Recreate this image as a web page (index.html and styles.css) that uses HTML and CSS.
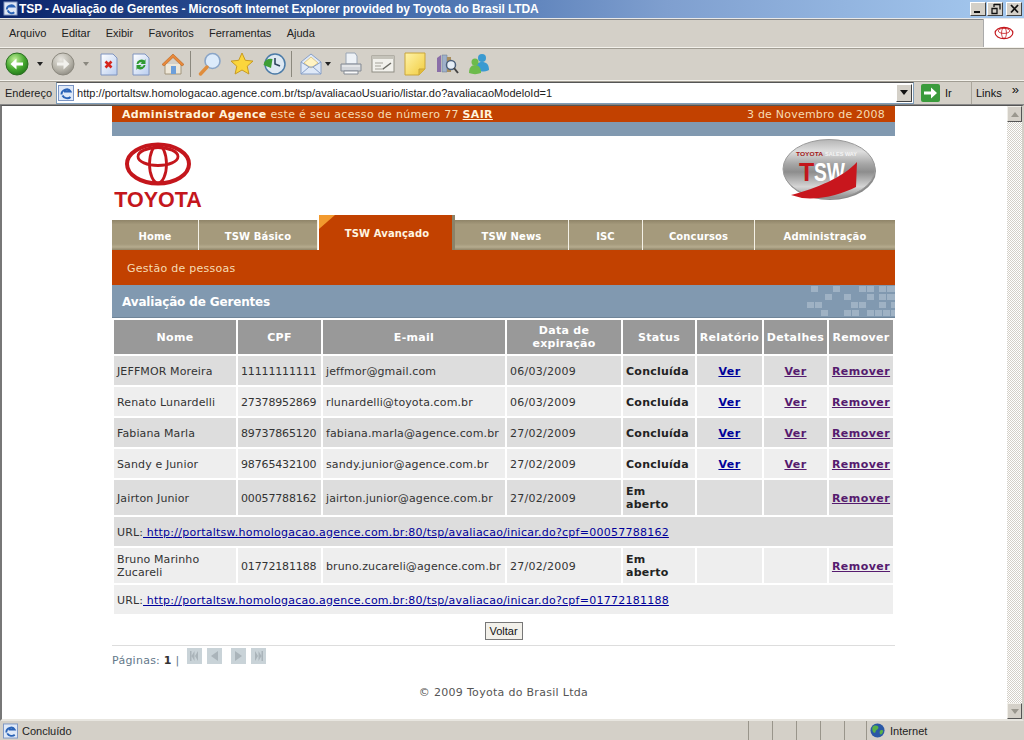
FILE: index.html
```html
<!DOCTYPE html>
<html lang="pt-BR">
<head>
<meta charset="utf-8">
<title>TSP - Avaliação de Gerentes</title>
<link rel="stylesheet" href="styles.css">
</head>
<body>
<svg class="defs" width="0" height="0">
  <defs>
    <radialGradient id="gGreen" cx="40%" cy="30%" r="80%"><stop offset="0" stop-color="#c4f09a"/><stop offset=".55" stop-color="#45a82e"/><stop offset="1" stop-color="#1b6d16"/></radialGradient>
    <radialGradient id="gGrey" cx="40%" cy="30%" r="80%"><stop offset="0" stop-color="#e8e6e0"/><stop offset=".6" stop-color="#b5b2a8"/><stop offset="1" stop-color="#85827a"/></radialGradient>
    <linearGradient id="gPage" x1="0" y1="0" x2="1" y2="1"><stop offset="0" stop-color="#fff"/><stop offset="1" stop-color="#b9cdef"/></linearGradient>
    <linearGradient id="gNote" x1="0" y1="0" x2="1" y2="1"><stop offset="0" stop-color="#fff3a8"/><stop offset="1" stop-color="#f1cc3f"/></linearGradient>
    <linearGradient id="gBadge" x1="0" y1="0" x2="0" y2="1"><stop offset="0" stop-color="#b5b5b5"/><stop offset=".2" stop-color="#dedede"/><stop offset=".42" stop-color="#a5a5a5"/><stop offset=".55" stop-color="#8d8d8d"/><stop offset=".8" stop-color="#d5d5d5"/><stop offset="1" stop-color="#8a8a8a"/></linearGradient>
    <symbol id="emblem" viewBox="0 0 70 46">
      <g fill="none" stroke="currentColor">
        <ellipse cx="35" cy="23" rx="31" ry="19.500" stroke-width="4"/>
        <ellipse cx="35" cy="15.500" rx="20" ry="9" stroke-width="2.800"/>
        <ellipse cx="35" cy="23" rx="8.500" ry="19" stroke-width="2.800"/>
      </g>
    </symbol>
  </defs>
</svg>
<div class="window">
  <header class="titlebar">
    <svg class="ie-small" width="15" height="15" viewBox="0 0 16 16"><rect x="1" y="1" width="14" height="14" fill="#dfe7f5" stroke="#6f86b5"/><path d="M4 9c0-4 6-6 8-3H6m-1 4c1 3 5 4 7 2" fill="none" stroke="#2a63b7" stroke-width="2"/></svg>
    <span class="title-text">TSP - Avaliação de Gerentes - Microsoft Internet Explorer provided by Toyota do Brasil LTDA</span>
    <div class="winbtns">
      <span class="winbtn"><svg width="13" height="12" viewBox="0 0 13 12"><rect x="2" y="8" width="6" height="2" fill="#111"/></svg></span>
      <span class="winbtn"><svg width="13" height="12" viewBox="0 0 13 12"><path d="M5 1.500h6v5M5 1v3M3 5.500h5v5H3z" fill="none" stroke="#111" stroke-width="1.300"/></svg></span>
      <span class="winbtn"><svg width="13" height="12" viewBox="0 0 13 12"><path d="M3 2l7 7.500M10 2l-7 7.500" stroke="#111" stroke-width="1.800"/></svg></span>
    </div>
  </header>

  <nav class="menubar">
    <div class="menus">
      <span>Arquivo</span><span>Editar</span><span>Exibir</span><span>Favoritos</span><span>Ferramentas</span><span>Ajuda</span>
    </div>
    <div class="throbber"><svg class="throb-logo" width="20" height="14"><use href="#emblem"/></svg></div>
  </nav>

  <div class="toolbar">
    <svg class="ti" width="24" height="24" viewBox="0 0 24 24"><circle cx="12" cy="12" r="11" fill="url(#gGreen)" stroke="#2c6f22"/><path d="M18 10.500h-6.500V6.500L5.500 12l6 5.500v-4H18z" fill="#fff"/></svg>
    <span class="drop"></span>
    <svg class="ti" width="24" height="24" viewBox="0 0 24 24"><circle cx="12" cy="12" r="11" fill="url(#gGrey)" stroke="#8b887e"/><path d="M6 10.500h6.500V6.500L18.500 12l-6 5.500v-4H6z" fill="#f2f1ed"/></svg>
    <span class="drop drop-off"></span>
    <svg class="ti" width="24" height="24" viewBox="0 0 24 24"><path d="M4 2h12l4 4v17H4z" fill="url(#gPage)" stroke="#7f94c0"/><path d="M8.500 9.500l6 6m0-6l-6 6" stroke="#d6241d" stroke-width="2.600"/></svg>
    <svg class="ti" width="24" height="24" viewBox="0 0 24 24"><path d="M4 2h12l4 4v17H4z" fill="url(#gPage)" stroke="#7f94c0"/><path d="M7.500 12a5 5 0 0 1 8-3.500l1-1.500v5h-5l1.500-1.500a2.800 2.800 0 0 0-3.700 1.500z" fill="#2f9a32"/><path d="M16.500 13a5 5 0 0 1-8 3.500l-1 1.500v-5h5L11 14.500a2.800 2.800 0 0 0 3.700-1.500z" fill="#2f9a32"/></svg>
    <svg class="ti" width="24" height="24" viewBox="0 0 24 24"><path d="M4 12v10h16V12" fill="#eee7d8" stroke="#a2957c"/><path d="M1 12.500L12 2l11 10.500-2 1.500-9-8.500L3 14z" fill="#e8883a" stroke="#b8641f" stroke-width=".6"/><rect x="10" y="14" width="5" height="8" fill="#6d9fda"/></svg>
    <span class="sep"></span>
    <svg class="ti" width="24" height="24" viewBox="0 0 24 24"><circle cx="14.500" cy="9" r="7.500" fill="#dcebfb" stroke="#8aa5c7" stroke-width="1.600"/><path d="M9 15l-6.500 7" stroke="#e08d3c" stroke-width="3.400" stroke-linecap="round"/></svg>
    <svg class="ti" width="24" height="24" viewBox="0 0 24 24"><path d="M12 1l3.300 7.300 7.700.8-5.800 5.100 1.700 7.800-6.900-4-6.900 4 1.700-7.800L1 9.100l7.700-.8z" fill="#fbd63c" stroke="#c79a24"/></svg>
    <svg class="ti" width="24" height="24" viewBox="0 0 24 24"><circle cx="13" cy="12" r="10" fill="#dfe9f3" stroke="#4b7ba8" stroke-width="1.500"/><path d="M13 6v6l5 2" fill="none" stroke="#30465f" stroke-width="1.600"/><path d="M1.500 13a7 7 0 0 1 9-6l-1.500 9z" fill="#3f9e35"/></svg>
    <span class="sep"></span>
    <svg class="ti" width="24" height="24" viewBox="0 0 24 24"><path d="M2 10l10-8 10 8v12H2z" fill="#dfe9f8" stroke="#88a0c8"/><path d="M5 11l7-6 7 6-7 5z" fill="#fff3c4" stroke="#d6b765" stroke-width=".7"/><path d="M2 22l8-7h4l8 7M2 10l8 5m12-5l-8 5" fill="none" stroke="#88a0c8"/></svg>
    <span class="drop drop-mail"></span>
    <svg class="ti" width="24" height="24" viewBox="0 0 24 24"><path d="M7 1h9l2 3v8H7z" fill="#eef2f7" stroke="#9aa6b6"/><path d="M2 12h20v7H2z" fill="#d2d5da" stroke="#858b94"/><path d="M5 19h14v3H5z" fill="#fafafa" stroke="#858b94"/><path d="M3 14h18" stroke="#f5f5f5"/></svg>
    <svg class="ti" width="24" height="24" viewBox="0 0 24 24"><rect x="1" y="4" width="22" height="16" fill="#f2f1ec" stroke="#8f8d84"/><path d="M1 4h22v3H1z" fill="#c5c3ba"/><path d="M4 11h8M4 14h6M4 17h9" stroke="#a3a198"/><path d="M12 17l8-6" stroke="#6b6a63" stroke-width="1.500"/></svg>
    <svg class="ti" width="24" height="24" viewBox="0 0 24 24"><path d="M2 1h20v16l-6 6H2z" fill="url(#gNote)" stroke="#c9a53a"/><path d="M16 23v-6h6" fill="#e2bc3a" stroke="#c9a53a"/></svg>
    <svg class="ti" width="24" height="24" viewBox="0 0 24 24"><path d="M2 6l4-3v17H2z" fill="#8a6ea8"/><path d="M7 3h5v17H7z" fill="#9fb0c9" stroke="#67788f" stroke-width=".5"/><path d="M12 5h4v15h-4z" fill="#a98f5e"/><circle cx="16" cy="13" r="4.500" fill="#e6eef7" stroke="#4c5f7a" stroke-width="1.500"/><path d="M19 16l4 5" stroke="#444" stroke-width="2"/></svg>
    <svg class="ti" width="24" height="24" viewBox="0 0 24 24"><circle cx="15" cy="6" r="4" fill="#3a9ad1"/><path d="M8 18c0-6 3-8 7-8s7 2 7 8c-4 2-10 2-14 0z" fill="#3a9ad1"/><circle cx="8" cy="10" r="3.500" fill="#6dbb4c"/><path d="M2 21c0-5 2-8 6-8s6 3 6 8c-4 1.500-8 1.500-12 0z" fill="#6dbb4c"/></svg>
  </div>

  <div class="addressbar">
    <span class="addr-label">Endereço</span>
    <div class="addr-field">
      <svg class="addr-ie" width="16" height="16" viewBox="0 0 16 16"><rect x=".5" y=".5" width="15" height="15" fill="#dfe9f8" stroke="#7b95c4"/><path d="M3.500 9.500c0-5 7-7 9-3H6m-1.500 4c1.500 3 6 3.500 8 1.500" fill="none" stroke="#2a63b7" stroke-width="2"/></svg>
      <span class="addr-url">http://portaltsw.homologacao.agence.com.br/tsp/avaliacaoUsuario/listar.do?avaliacaoModeloId=1</span>
      <span class="addr-drop"><span class="arrow-down"></span></span>
    </div>
    <svg class="go" width="19" height="18" viewBox="0 0 19 18"><rect width="19" height="18" rx="2" fill="#3a9b3c"/><path d="M3 7.500h7V3.500L16 9l-6 5.500v-4H3z" fill="#fff"/></svg>
    <span class="go-label">Ir</span>
    <span class="links">Links<span class="chev">»</span></span>
  </div>

  <div class="viewport">
    <main class="page">
      <div class="topbar">
        <span><b>Administrador Agence</b> este é seu acesso de número 77 <a class="sair" href="#">SAIR</a></span>
        <span class="top-date">3 de Novembro de 2008</span>
      </div>
      <div class="strip"></div>
      <div class="brand">
        <div class="toyota">
          <svg class="emblem" width="70" height="46"><use href="#emblem"/></svg>
          <span class="toyota-word">TOYOTA</span>
        </div>
        <svg class="tsw" width="96" height="66" viewBox="0 0 96 66">
          <ellipse cx="48" cy="33" rx="46" ry="29" fill="#8a8a8a"/>
          <ellipse cx="47" cy="31" rx="46" ry="29.500" fill="url(#gBadge)" stroke="#9a9a9a"/>
          <text x="14" y="18" class="tsw-small" fill="#a21818" textLength="27" lengthAdjust="spacingAndGlyphs">TOYOTA</text>
          <text x="43" y="18" class="tsw-small" fill="#f4f4f4" textLength="32" lengthAdjust="spacingAndGlyphs">SALES WAY</text>
          <text x="17" y="43" class="tsw-big" fill="#c3161c">T</text>
          <text x="32" y="43" class="tsw-big" fill="#fff" textLength="31" lengthAdjust="spacingAndGlyphs">SW</text>
          <path d="M9 57C35 50 60 40 75 24L74 49C60 56 40 62 20 60z" fill="#c8161d"/>
        </svg>
      </div>
      <nav class="tabs">
        <a class="tab t-home" href="#">Home</a>
        <a class="tab t-basico" href="#">TSW Básico</a>
        <a class="tab-active" href="#"><span class="fold"></span>TSW Avançado</a>
        <a class="tab t-news" href="#">TSW News</a>
        <a class="tab t-isc" href="#">ISC</a>
        <a class="tab t-conc" href="#">Concursos</a>
        <a class="tab t-adm" href="#">Administração</a>
      </nav>
      <div class="subnav">Gestão de pessoas</div>
      <div class="pagetitle">
        <h1>Avaliação de Gerentes</h1>
        <svg class="deco" width="88" height="32" viewBox="0 0 88 32">
          <g fill="#9fb2c4">
            <rect x="4" y="1" width="7" height="6"/><rect x="26" y="1" width="7" height="6"/><rect x="52" y="1" width="7" height="6"/><rect x="60" y="1" width="7" height="6"/><rect x="72" y="1" width="7" height="6"/><rect x="80" y="1" width="8" height="6"/>
            <rect x="18" y="9" width="7" height="6"/><rect x="37" y="9" width="7" height="6"/><rect x="60" y="9" width="7" height="6"/><rect x="72" y="9" width="7" height="6"/><rect x="80" y="9" width="8" height="6"/>
            <rect x="0" y="17" width="7" height="6"/><rect x="8" y="17" width="7" height="6"/><rect x="44" y="17" width="7" height="6"/><rect x="52" y="17" width="7" height="6"/><rect x="72" y="17" width="7" height="6"/><rect x="84" y="17" width="4" height="6"/>
            <rect x="14" y="25" width="7" height="6"/><rect x="37" y="25" width="7" height="6"/><rect x="45" y="25" width="7" height="6"/><rect x="60" y="25" width="7" height="6"/><rect x="68" y="25" width="7" height="6"/><rect x="76" y="25" width="7" height="6"/><rect x="84" y="25" width="4" height="6"/>
          </g>
        </svg>
      </div>

      <table class="grid">
        <colgroup>
          <col class="c-nome"><col class="c-cpf"><col class="c-mail"><col class="c-data"><col class="c-status"><col class="c-rel"><col class="c-det"><col class="c-rem">
        </colgroup>
        <thead>
          <tr><th>Nome</th><th>CPF</th><th>E-mail</th><th>Data de expiração</th><th>Status</th><th>Relatório</th><th>Detalhes</th><th>Remover</th></tr>
        </thead>
        <tbody>
          <tr class="odd"><td>JEFFMOR Moreira</td><td class="num">11111111111</td><td>jeffmor@gmail.com</td><td class="date">06/03/2009</td><td class="st">Concluída</td><td class="ac"><a class="new" href="#">Ver</a></td><td class="ac"><a class="vis" href="#">Ver</a></td><td class="ac"><a class="vis" href="#">Remover</a></td></tr>
          <tr class="even"><td>Renato Lunardelli</td><td class="num">27378952869</td><td>rlunardelli@toyota.com.br</td><td class="date">06/03/2009</td><td class="st">Concluída</td><td class="ac"><a class="new" href="#">Ver</a></td><td class="ac"><a class="vis" href="#">Ver</a></td><td class="ac"><a class="vis" href="#">Remover</a></td></tr>
          <tr class="odd"><td>Fabiana Marla</td><td class="num">89737865120</td><td>fabiana.marla@agence.com.br</td><td class="date">27/02/2009</td><td class="st">Concluída</td><td class="ac"><a class="new" href="#">Ver</a></td><td class="ac"><a class="vis" href="#">Ver</a></td><td class="ac"><a class="vis" href="#">Remover</a></td></tr>
          <tr class="even"><td>Sandy e Junior</td><td class="num">98765432100</td><td>sandy.junior@agence.com.br</td><td class="date">27/02/2009</td><td class="st">Concluída</td><td class="ac"><a class="new" href="#">Ver</a></td><td class="ac"><a class="vis" href="#">Ver</a></td><td class="ac"><a class="vis" href="#">Remover</a></td></tr>
          <tr class="odd tall"><td>Jairton Junior</td><td class="num">00057788162</td><td>jairton.junior@agence.com.br</td><td class="date">27/02/2009</td><td class="st">Em aberto</td><td></td><td></td><td class="ac"><a class="vis" href="#">Remover</a></td></tr>
          <tr class="odd"><td colspan="8">URL:<a class="url" href="#"> http://portaltsw.homologacao.agence.com.br:80/tsp/avaliacao/inicar.do?cpf=00057788162</a></td></tr>
          <tr class="even tall"><td>Bruno Marinho Zucareli</td><td class="num">01772181188</td><td>bruno.zucareli@agence.com.br</td><td class="date">27/02/2009</td><td class="st">Em aberto</td><td></td><td></td><td class="ac"><a class="vis" href="#">Remover</a></td></tr>
          <tr class="even"><td colspan="8">URL:<a class="url" href="#"> http://portaltsw.homologacao.agence.com.br:80/tsp/avaliacao/inicar.do?cpf=01772181188</a></td></tr>
        </tbody>
      </table>

      <div class="actions"><button class="btn" type="button">Voltar</button></div>
      <div class="pager">
        <span class="pager-text">Páginas: <b>1</b> |</span>
        <span class="pg"><svg width="15" height="16" viewBox="0 0 15 16"><rect width="15" height="16" fill="#c9d3d8"/><path d="M3 3v10h1.500V3zM8 8l3-5v10zM4.500 8l3-5v10z" fill="#aab4ba"/></svg></span>
        <span class="pg"><svg width="15" height="16" viewBox="0 0 15 16"><rect width="15" height="16" fill="#c9d3d8"/><path d="M4 8l7-5v10z" fill="#aab4ba"/></svg></span>
        <span class="pg pg-gap"><svg width="15" height="16" viewBox="0 0 15 16"><rect width="15" height="16" fill="#c9d3d8"/><path d="M11 8L4 3v10z" fill="#aab4ba"/></svg></span>
        <span class="pg"><svg width="15" height="16" viewBox="0 0 15 16"><rect width="15" height="16" fill="#c9d3d8"/><path d="M12 3v10h-1.500V3zM7 8L4 3v10zM10.500 8l-3-5v10z" fill="#aab4ba"/></svg></span>
      </div>
      <footer class="copy">© 2009 Toyota do Brasil Ltda</footer>
    </main>
    <div class="scrollbar">
      <span class="sb-btn"><span class="arrow-up"></span></span>
      <span class="sb-track"></span>
      <span class="sb-btn"><span class="arrow-down arrow-soft"></span></span>
    </div>
  </div>

  <footer class="statusbar">
    <svg class="st-ie" width="15" height="16" viewBox="0 0 16 16"><rect x=".5" y=".5" width="15" height="15" fill="#dfe9f8" stroke="#7b95c4"/><path d="M3.500 9.500c0-5 7-7 9-3H6m-1.500 4c1.500 3 6 3.500 8 1.500" fill="none" stroke="#2a63b7" stroke-width="2"/></svg>
    <span class="st-text">Concluído</span>
    <span class="st-cell"></span><span class="st-cell"></span><span class="st-cell"></span><span class="st-cell"></span><span class="st-cell st-cell-narrow"></span>
    <span class="st-zone">
      <svg width="15" height="15" viewBox="0 0 16 16"><circle cx="8" cy="8" r="7.500" fill="#2a58a6"/><path d="M4 3c3-1 5 0 5 2S6 7 6 9s-2 2-3 0-1-5 1-6zM11 8c2-1 3 0 3 1s-2 4-3 3-1-3 0-4z" fill="#58b048"/></svg>
      Internet
    </span>
  </footer>
</div>
</body>
</html>
```
FILE: styles.css
```css
* { box-sizing: border-box; }
html, body { margin: 0; padding: 0; height: 100%; overflow: hidden; background: #fff; }
.defs { display: block; height: 0; }
.window { width: 1024px; height: 740px; display: flex; flex-direction: column; font-family: "Liberation Sans", Arial, sans-serif; font-size: 11px; color: #111; background: #d4d0c8; overflow: hidden; }

/* Title bar */
.titlebar { height: 19px; flex: none; display: flex; align-items: center; padding: 0 2px 1px 3px; background: linear-gradient(90deg, #0a246a 0%, #3a64a6 35%, #7f9fcf 65%, #a6caf0 100%); border-bottom: 1px solid #e8e8e8; }
.ie-small { flex: none; margin-right: 1px; }
.title-text { flex: 1; color: #fff; font: bold 12px "Liberation Sans", sans-serif; letter-spacing: -.09px; white-space: nowrap; overflow: hidden; }
.winbtns { display: flex; gap: 1px; flex: none; }
.winbtns .winbtn:last-child { margin-left: 2px; }
.winbtn { width: 16px; height: 14px; background: #d4d0c8; border: 1px solid; border-color: #fff #444 #444 #fff; display: flex; align-items: center; justify-content: center; }

/* Menu */
.menubar { height: 29px; flex: none; display: flex; justify-content: space-between; border-bottom: 1px solid #f4f2ec; box-shadow: inset 0 1px 0 #888; }
.menus { display: flex; align-items: center; gap: 15.300px; padding-left: 9px; font-size: 11px; color: #222; }
.throbber { width: 41px; background: #fff; border-left: 1px solid #aaa; display: flex; align-items: center; justify-content: center; }
.throb-logo { color: #c4161c; }

/* Toolbar */
.toolbar { height: 33px; flex: none; display: flex; align-items: center; gap: 8px; padding-left: 5px; border-bottom: 1px solid #f4f2ec; box-shadow: inset 0 1px 0 #a09c92; }
.ti { flex: none; }
.drop { width: 0; height: 0; border: 3px solid transparent; border-top: 4px solid #222; border-bottom: 0; flex: none; width: 6px; }
.drop-off { border-top-color: #8a887f; }
.drop-mail { margin-left: -6px; }
.sep { width: 1px; height: 26px; background: #8b887e; margin: 0 -1px 0 -3px; flex: none; }

/* Address */
.addressbar { height: 24px; flex: none; display: flex; align-items: center; padding-left: 5px; box-shadow: inset 0 1px 0 #a09c92; border-bottom: 1px solid #888; }
.addr-label { width: 51px; font-size: 11px; color: #222; flex: none; }
.addr-field { width: 858px; height: 22px; background: #fff; border: 1px solid #7f9db9; border-top-color: #555; display: flex; align-items: center; padding-left: 1px; flex: none; }
.addr-ie { flex: none; }
.addr-url { flex: 1; padding-left: 3px; font-size: 11px; letter-spacing: .03px; color: #222; white-space: nowrap; }
.addr-drop { width: 16px; height: 18px; background: #d4d0c8; border: 1px solid; border-color: #fff #444 #444 #fff; display: flex; align-items: center; justify-content: center; margin-right: 1px; }
.arrow-down { width: 0; height: 0; border: 4px solid transparent; border-top: 5px solid #111; border-bottom: 0; display: block; }
.arrow-up { width: 0; height: 0; border: 4px solid transparent; border-bottom: 5px solid #9a978e; border-top: 0; display: block; }
.arrow-soft { border-top-color: #9a978e; }
.go { margin-left: 7px; flex: none; }
.go-label { width: 31px; padding-left: 5px; flex: none; }
.links { flex: 1; height: 100%; border-left: 1px solid #aaa69c; padding-left: 4px; display: flex; align-items: center; justify-content: space-between; padding-right: 5px; }
.chev { font-size: 13px; margin-top: -6px; }

/* Viewport */
.viewport { flex: 1; min-height: 0; display: flex; background: #fff; border-top: 1px solid #555; border-left: 2px solid #777; border-right: 2px solid #d4d0c8; border-bottom: 2px solid #e8e6e0; }
.page { width: 783px; margin-left: 110px; font-family: "DejaVu Sans", Verdana, sans-serif; font-size: 11px; color: #333; }
.scrollbar { width: 17px; margin-left: 112px; display: flex; flex-direction: column; }
.sb-btn { height: 16px; flex: none; background: #d4d0c8; border: 1px solid; border-color: #f0eee8 #555 #555 #f0eee8; display: flex; align-items: center; justify-content: center; }
.sb-track { flex: 1; background: repeating-conic-gradient(#d4d0c8 0 25%, #fff 0 50%) 0 0 / 2px 2px; }

.topbar { height: 16px; background: #c24100; color: #f5dcb4; display: flex; justify-content: space-between; align-items: center; padding: 0 10px; letter-spacing: .32px; line-height: 1; }
.top-date { letter-spacing: .22px; }
.topbar b { color: #fff3dc; }
.sair { color: #fff3dc; font-weight: bold; }
.strip { height: 14px; background: #8199b0; }
.brand { height: 79px; display: flex; justify-content: space-between; align-items: flex-start; padding: 2px 17px 0 2px; }
.toyota { display: flex; flex-direction: column; align-items: center; padding-top: 3px; width: 88px; }
.emblem { color: #c4161c; display: block; }
.toyota-word { font: bold 21.500px/1 "Liberation Sans", sans-serif; color: #c4161c; margin-top: 3px; }
.tsw { display: block; }
.tsw-small { font: bold 5px "Liberation Sans", sans-serif; }
.tsw-big { font: bold 25px "Liberation Sans", sans-serif; }

/* Tabs */
.tabs { height: 35px; display: flex; align-items: flex-end; font-weight: bold; letter-spacing: .12px; font-size: 10px; }
.tab { height: 30px; display: flex; align-items: flex-end; justify-content: center; padding-bottom: 8px; color: #fff; text-decoration: none; background: linear-gradient(180deg, #8f8468 0, #a59a7c 15%, #a59a7c 80%, #b5ab8e 90%, #8f8468 100%); border-right: 1px solid #f4f1e6; }
.t-home { width: 87px; }
.t-basico { width: 119px; }
.tab-active { width: 137px; height: 35px; position: relative; background: #c24100; color: #fff5e0; text-decoration: none; display: flex; justify-content: center; padding-top: 13px; padding-left: 3px; border-left: 1px solid #fff; border-right: 3px solid #8b8268; overflow: hidden; }
.fold { position: absolute; left: 0; top: 0; width: 0; height: 0; border-top: 14px solid #f29a2e; border-right: 16px solid transparent; }
.t-news { width: 114px; }
.t-isc { width: 74px; }
.t-conc { width: 112px; }
.t-adm { width: 140px; border-right: 0; }

.subnav { height: 35px; background: #c24100; color: #f5dcb4; padding: 1px 0 0 15px; display: flex; align-items: center; letter-spacing: .27px; }
.pagetitle { height: 33px; background: #8199b0; display: flex; justify-content: space-between; align-items: center; padding-left: 10px; border-bottom: 1px solid #6f8599; }
.pagetitle h1 { margin: 1px 0 0; font-size: 12px; font-weight: bold; color: #fff; letter-spacing: -.15px; }
.deco { display: block; }

/* Table */
.grid { width: 783px; border-collapse: separate; border-spacing: 2px; table-layout: fixed; margin: 0; }
.c-nome { width: 122px; }
.c-cpf { width: 83px; }
.c-mail { width: 182px; }
.c-data { width: 114px; }
.c-status { width: 72px; }
.c-rel { width: 65px; }
.c-det { width: 63px; }
.c-rem { width: 64px; }
.grid th { height: 34px; background: #999; color: #fff; font-size: 11px; font-weight: bold; letter-spacing: .3px; line-height: 13px; padding: 0 1px; text-align: center; }
.grid td { height: 29px; padding: 1px 2px 0 3px; letter-spacing: .12px; line-height: 13px; }
.grid .tall td { height: 35px; }
.odd td { background: #dddddd; }
.even td { background: #eeeeee; }
.grid .num { letter-spacing: -.15px; }
.grid .date { letter-spacing: .25px; }
.grid td.st { font-weight: bold; color: #222; letter-spacing: .25px; padding-right: 8px; }
.grid .ac { text-align: center; font-weight: bold; letter-spacing: .45px; padding: 1px 1px 0; }
.new { color: #000099; }
.vis { color: #551a6e; }
.url { color: #000099; white-space: pre; letter-spacing: .25px; }

.actions { height: 30px; display: flex; justify-content: center; align-items: center; border-bottom: 1px solid #ddd; }
.btn { width: 38px; height: 18px; padding: 0; background: #f2f0ea; border: 1px solid #777; border-radius: 0; font: 11px "Liberation Sans", sans-serif; color: #111; }
.pager { height: 30px; display: flex; align-items: center; color: #63788a; letter-spacing: .25px; padding-bottom: 2px; }
.pager-text { margin-right: 3px; }
.pager-text b { color: #333; }
.pg { display: block; margin-left: 5px; }
.pg svg { display: block; margin-top: -9px; }
.pg-gap { margin-left: 9px; }
.copy { text-align: center; padding-top: 10px; letter-spacing: .3px; color: #555; font-size: 11px; }

/* Status */
.statusbar { height: 19px; flex: none; display: flex; align-items: center; padding-left: 3px; font-size: 11px; color: #222; }
.st-ie { flex: none; }
.st-text { width: 730px; padding-left: 4px; flex: none; }
.st-cell { width: 24px; height: 100%; border-left: 1px solid #99958b; flex: none; }
.st-cell-narrow { width: 22px; }
.st-zone { flex: 1; height: 100%; border-left: 1px solid #99958b; display: flex; align-items: center; gap: 5px; padding-left: 3px; }
```
